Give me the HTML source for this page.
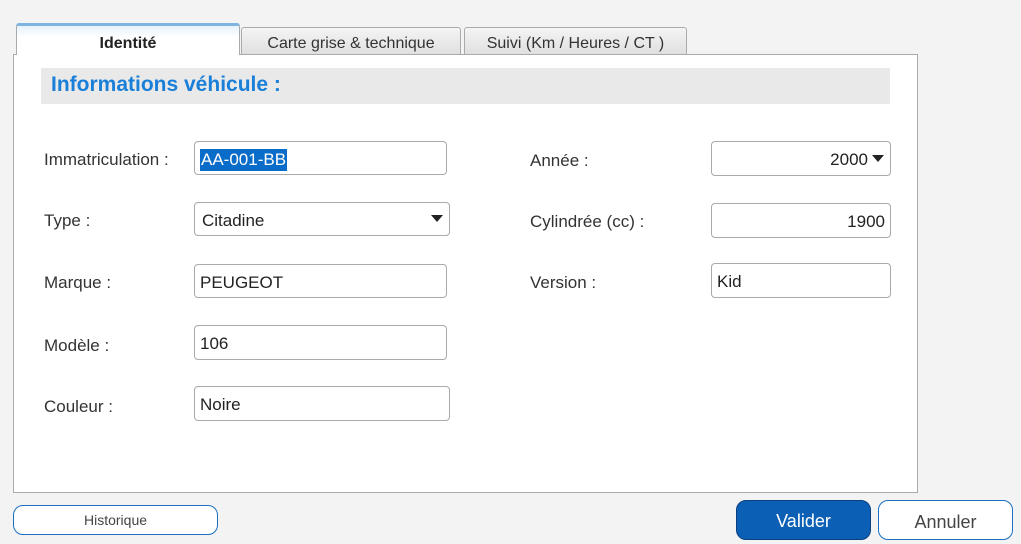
<!DOCTYPE html>
<html><head><meta charset="utf-8"><style>
body{margin:0;width:1021px;height:543px;background:#f3f3f3;font-family:"Liberation Sans",sans-serif;position:relative;overflow:hidden;color:#222}
.a{position:absolute;box-sizing:border-box}
.tab{border:1px solid #aaa;border-bottom:none;background:linear-gradient(#f4f4f4,#e0e0e0);text-align:center;font-size:16px;color:#333;border-radius:3px 3px 0 0}
.lbl{font-size:17px;color:#333}
.in{background:#fff;border:1px solid #aaa;border-radius:4px;font-size:17px;padding-left:5px;padding-top:3px;line-height:30px;color:#222}
.arr{position:absolute;right:6px;top:12px;width:0;height:0;border-left:6px solid transparent;border-right:6px solid transparent;border-top:7px solid #222}
.btn{border:1px solid #1a6fc4;border-radius:10px;background:#fff;text-align:center;color:#444}
</style></head><body>
<div class="a" style="left:13px;top:54px;width:905px;height:439px;background:#fff;border:1px solid #aaa"></div>
<div class="a tab" style="left:241px;top:27px;width:220px;height:27px;line-height:31px">Carte grise &amp; technique</div>
<div class="a tab" style="left:464px;top:27px;width:223px;height:27px;line-height:31px">Suivi (Km / Heures / CT )</div>
<div class="a tab" style="left:16px;top:23px;width:224px;height:32px;line-height:36px;background:linear-gradient(#e8f2fb,#fff 40%);border-top:3px solid #7fb3e0;font-weight:bold;color:#222">Identité</div>
<div class="a" style="left:41px;top:68px;width:849px;height:36px;background:#e9e9e9;color:#1a7fd8;font-weight:bold;font-size:21px;line-height:34px;padding-left:10px">Informations véhicule :</div>

<div class="a lbl" style="left:44px;top:150px">Immatriculation :</div>
<div class="a in" style="left:194px;top:141px;width:253px;height:34px"><span style="background:#0a6cc9;color:#fff;line-height:22px;display:inline-block;padding:0 1px">AA-001-BB</span></div>
<div class="a lbl" style="left:44px;top:211px">Type :</div>
<div class="a in" style="left:194px;top:202px;width:256px;height:34px;padding-left:7px">Citadine<div class="arr"></div></div>
<div class="a lbl" style="left:44px;top:273px">Marque :</div>
<div class="a in" style="left:194px;top:264px;width:253px;height:34px">PEUGEOT</div>
<div class="a lbl" style="left:44px;top:336px">Modèle :</div>
<div class="a in" style="left:194px;top:325px;width:253px;height:35px">106</div>
<div class="a lbl" style="left:44px;top:397px">Couleur :</div>
<div class="a in" style="left:194px;top:386px;width:256px;height:35px">Noire</div>

<div class="a lbl" style="left:530px;top:151px">Année :</div>
<div class="a in" style="left:711px;top:141px;width:180px;height:35px;text-align:right;padding-right:22px">2000<div class="arr" style="top:13px"></div></div>
<div class="a lbl" style="left:530px;top:212px">Cylindrée (cc) :</div>
<div class="a in" style="left:711px;top:203px;width:180px;height:35px;text-align:right;padding-right:5px">1900</div>
<div class="a lbl" style="left:530px;top:273px">Version :</div>
<div class="a in" style="left:711px;top:263px;width:180px;height:35px">Kid</div>

<div class="a btn" style="left:13px;top:505px;width:205px;height:30px;line-height:29px;font-size:14px">Historique</div>
<div class="a btn" style="left:736px;top:500px;width:135px;height:40px;line-height:41px;font-size:18px;background:#0b5fb5;border-color:#0a3f80;color:#fff">Valider</div>
<div class="a btn" style="left:878px;top:500px;width:135px;height:40px;line-height:43px;font-size:18px">Annuler</div>
</body></html>
